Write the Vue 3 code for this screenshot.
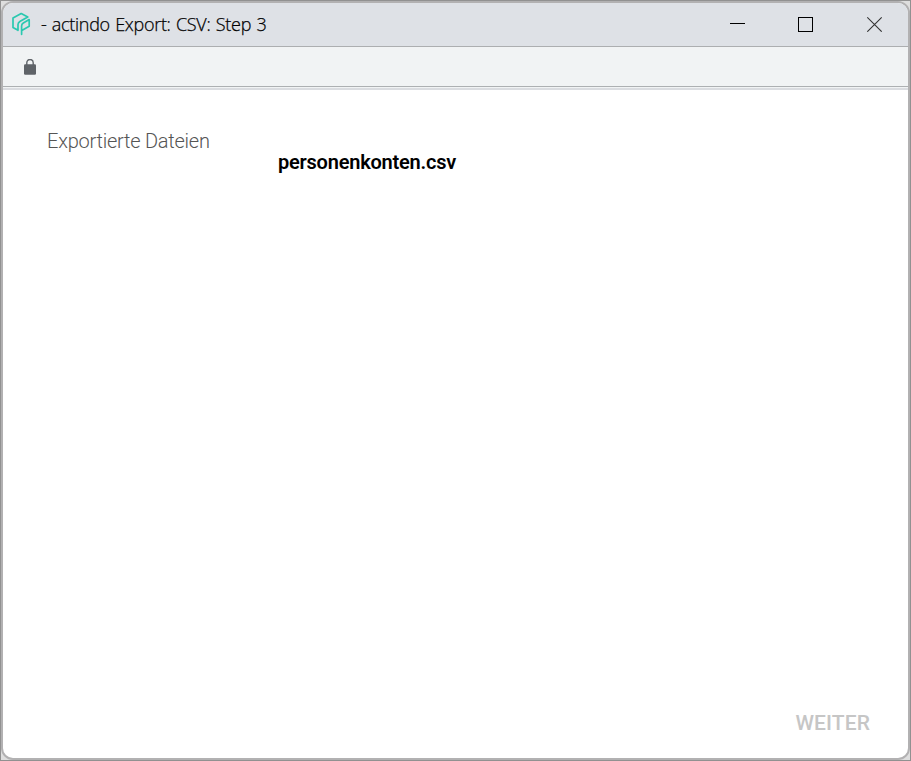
<script setup>
const title = '- actindo Export: CSV: Step 3'
const files = ['personenkonten.csv']
</script>

<template>
  <div class="desktop">
    <div class="window">
      <header class="titlebar">
        <svg class="logo" width="20" height="24" viewBox="0 0 20 24" fill="none" stroke="#2bc8b0" stroke-width="1.7" stroke-linejoin="round" stroke-linecap="round">
          <path d="M7 18.3L2 15.5V6L10.2 1.5L16.8 5.1L9.2 9.2Q7 10.4 7 12.6V18.3" />
          <path d="M10.6 22.3V13.9Q10.6 12 12.3 11L18.2 7.6V14.3L11.2 18.2" />
        </svg>
        <h1 class="title">{{ title }}</h1>
        <div class="controls">
          <svg width="16" height="16" viewBox="0 0 16 16" shape-rendering="crispEdges"><path d="M0 7h15v1H0z" /></svg>
          <svg width="16" height="16" viewBox="0 0 16 16" fill="none" stroke="#000" shape-rendering="crispEdges"><path d="M.5 1.5h14v14H.5z" /></svg>
          <svg width="16" height="16" viewBox="0 0 16 16" fill="none" stroke="#333" stroke-width="1.1"><path d="M.3 1.3L14.7 15.7M14.7 1.3L.3 15.7" /></svg>
        </div>
      </header>
      <div class="addressbar">
        <svg width="12" height="16" viewBox="0 0 12 16">
          <rect y="5.3" width="12" height="10.4" rx="1.2" fill="#5f6368" />
          <path d="M2.8 6V3.7a3.2 3.2 0 0 1 6.4 0V6" fill="none" stroke="#5f6368" stroke-width="1.4" />
        </svg>
      </div>
      <main class="content">
        <div class="label">Exportierte Dateien</div>
        <div class="files">
          <div v-for="file in files" :key="file" class="file">{{ file }}</div>
        </div>
        <button class="next" disabled>WEITER</button>
      </main>
    </div>
  </div>
</template>

<style>
body { margin: 0; }
</style>

<style scoped>
* { box-sizing: border-box; }
.desktop { width: 911px; height: 761px; border: 1px solid #919191; background: #dedede; }
.window { display: flex; flex-direction: column; width: 909px; height: 759px; border: 2px solid #b2b1b2; border-radius: 12px; overflow: hidden; background: #fff; }
.titlebar { display: flex; align-items: flex-start; flex: 0 0 44px; padding-left: 8px; background: #dee1e6; border-bottom: 1px solid #acaeb0; }
.logo { margin-top: 9px; }
.title { margin: 7px 0 0 10px; font: 300 18px/28px "Open Sans", "Noto Sans", sans-serif; letter-spacing: -0.3px; word-spacing: 1px; color: #000; -webkit-text-stroke: 0.25px #000; white-space: nowrap; }
.controls { display: flex; gap: 52px; margin: 13px 25px 0 auto; }
.controls svg:last-child { margin-left: 1px; }
.addressbar { flex: 0 0 43px; padding: 12px 0 0 21px; background: linear-gradient(#f1f3f4 0 39px, #adb0b2 39px 40px, #f1f3f4 40px 41px, #dadce0 41px); }
.content { flex: 1; display: flex; flex-direction: column; padding: 41px 38px 22px 44px; font-family: Roboto, sans-serif; }
.label { font-size: 20px; line-height: 20px; font-weight: 300; letter-spacing: -0.24px; color: #555; }
.files { padding-left: 231px; }
.file { font-size: 20px; line-height: 22px; font-weight: 600; letter-spacing: -0.22px; color: #000; }
.next { margin: auto 0 0 auto; padding: 0; border: 0; background: none; font: 500 21px/26px Roboto, sans-serif; letter-spacing: 0.1px; color: #c6c6c6; }
</style>
